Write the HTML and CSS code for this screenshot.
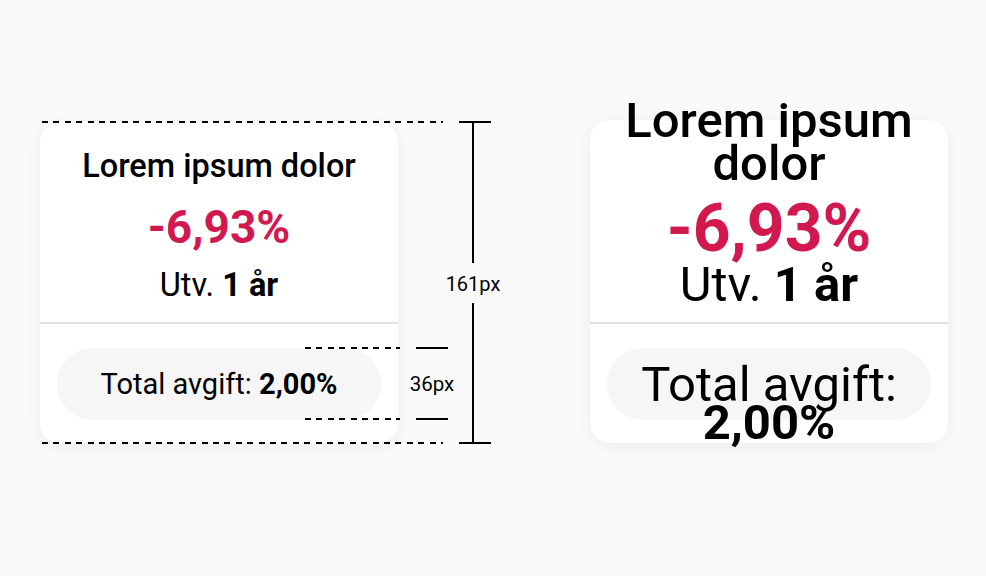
FILE: index.html
```html
<!DOCTYPE html>
<html lang="sv">
<head>
<meta charset="utf-8">
<title>Kort</title>
<link rel="stylesheet" href="styles.css">
</head>
<body>
<main class="stage">
  <section class="spec">
    <article class="card card--normal">
      <div class="card__top">
        <h2 class="card__title">Lorem ipsum dolor</h2>
        <p class="card__value">-6,93%</p>
        <p class="card__period">Utv. <b>1 år</b></p>
      </div>
      <div class="card__bottom">
        <p class="pill">Total avgift: <b>2,00%</b></p>
      </div>
    </article>
    <div class="dash dash--top"></div>
    <div class="dash dash--bottom"></div>
    <div class="tick tick--top"></div>
    <div class="tick tick--bottom"></div>
    <div class="vline vline--upper"></div>
    <div class="vline vline--lower"></div>
    <span class="label label--height">161px</span>
    <div class="dash dash--pill-top"></div>
    <div class="dash dash--pill-bottom"></div>
    <div class="tick tick--pill-top"></div>
    <div class="tick tick--pill-bottom"></div>
    <span class="label label--pill">36px</span>
  </section>
  <article class="card card--large">
    <div class="card__top">
      <h2 class="card__title">Lorem ipsum dolor</h2>
      <p class="card__value">-6,93%</p>
      <p class="card__period">Utv. <b>1 år</b></p>
    </div>
    <div class="card__bottom">
      <p class="pill">Total avgift: <b>2,00%</b></p>
    </div>
  </article>
</main>
</body>
</html>
```

FILE: styles.css
```css
* { box-sizing: border-box; }
html, body { margin: 0; padding: 0; }
body {
  width: 986px;
  height: 576px;
  overflow: hidden;
  background: #fafafa;
  font-family: Roboto, "Liberation Sans", sans-serif;
  color: #000;
}
.stage {
  display: flex;
  align-items: flex-start;
  padding: 120px 0 0 40px;
}
.spec {
  position: relative;
  margin-top: 2px;
}
.card {
  width: 358px;
  background: #fff;
  border-radius: 20px;
  box-shadow: 0 3px 18px rgba(0, 0, 0, 0.06);
  display: flex;
  flex-direction: column;
  text-align: center;
}
.card--normal { height: 321px; }
.card--large { height: 323px; margin-left: 192px; }

.card__top {
  border-bottom: 2px solid #e2e2e2;
  display: flex;
  flex-direction: column;
  justify-content: flex-end;
  padding: 0 16px;
}
.card--normal .card__top { height: 202px; padding-bottom: 18px; }
.card--large .card__top { height: 204px; padding-bottom: 12px; }

.card__title, .card__value, .card__period, .pill { margin: 0; }

.card__title { font-weight: 500; }
.card__value { font-weight: 700; color: #d2194f; }
.card__period { font-weight: 400; }
.card__period b, .pill b { font-weight: 700; }

.card--normal .card__title { font-size: 32.5px; line-height: 36px; }
.card--normal .card__value { font-size: 46px; line-height: 54px; margin-top: 16px; }
.card--normal .card__period { font-size: 32.5px; line-height: 38px; margin-top: 12px; }

.card--large .card__title { font-size: 49px; line-height: 43px; }
.card--large .card__value { font-size: 66px; line-height: 62px; margin-top: 13px; }
.card--large .card__period { font-size: 49px; line-height: 50px; }

.card__bottom {
  padding: 24px 17px 0;
}
.pill {
  height: 72px;
  border-radius: 36px;
  background: #f6f6f6;
  padding: 18px 12px 0;
}
.card--normal .pill { font-size: 29px; line-height: 36px; }
.card--large .pill { font-size: 49px; line-height: 38px; }

/* measurement annotations */
.dash {
  position: absolute;
  height: 2px;
  background: repeating-linear-gradient(90deg, #000 0 6px, transparent 6px 11.4px);
}
.dash--top { left: 2px; top: -1px; width: 401px; }
.dash--bottom { left: 2px; top: 320px; width: 401px; }
.dash--pill-top { left: 265px; top: 225px; width: 95px; }
.dash--pill-bottom { left: 265px; top: 296px; width: 95px; }
.tick {
  position: absolute;
  height: 2px;
  width: 32px;
  background: #000;
}
.tick--top { left: 419px; top: -1px; }
.tick--bottom { left: 419px; top: 320px; }
.tick--pill-top { left: 376px; top: 225px; }
.tick--pill-bottom { left: 376px; top: 296px; }
.vline {
  position: absolute;
  left: 432px;
  width: 2px;
  background: #000;
}
.vline--upper { top: 0; height: 141px; }
.vline--lower { top: 181px; height: 140px; }
.label {
  position: absolute;
  font-size: 20px;
  line-height: 20px;
  width: 80px;
  text-align: center;
  white-space: nowrap;
}
.label--height { left: 393px; top: 152px; }
.label--pill { left: 352px; top: 252px; font-size: 20.5px; }
```
